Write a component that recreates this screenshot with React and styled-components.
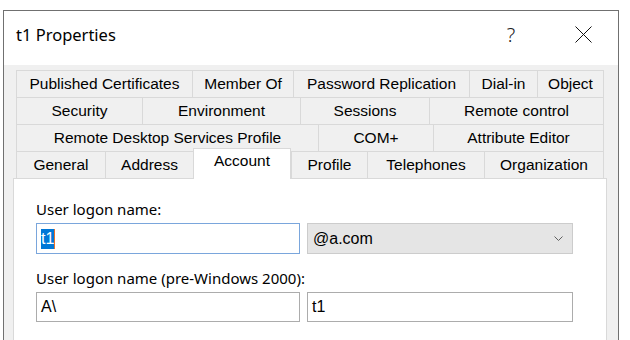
import styled, { createGlobalStyle } from "styled-components";

const GlobalStyle = createGlobalStyle`
  html, body {
    margin: 0;
    padding: 0;
    background: #ffffff;
  }
`;

const uiFont = `"Noto Sans", "Open Sans", sans-serif`;
const tabFont = `"Liberation Sans", Arial, sans-serif`;

const tabRows = [
  [
    { label: "Published Certificates", w: 176 },
    { label: "Member Of", w: 101 },
    { label: "Password Replication", w: 176 },
    { label: "Dial-in", w: 68 },
    { label: "Object", w: 67 },
  ],
  [
    { label: "Security", w: 126 },
    { label: "Environment", w: 158 },
    { label: "Sessions", w: 129 },
    { label: "Remote control", w: 175 },
  ],
  [
    { label: "Remote Desktop Services Profile", w: 302 },
    { label: "COM+", w: 115 },
    { label: "Attribute Editor", w: 171 },
  ],
  [
    { label: "General", w: 89 },
    { label: "Address", w: 88 },
    { label: "Account", w: 98, active: true },
    { label: "Profile", w: 76 },
    { label: "Telephones", w: 117 },
    { label: "Organization", w: 120 },
  ],
];

const Window = styled.div`
  margin: 10px 0 0 3px;
  width: 616px;
  height: 330px;
  box-sizing: border-box;
  border: 1px solid #707070;
  border-bottom: none;
  background: #f0f0f0;
  display: flex;
  flex-direction: column;
`;

const TitleBar = styled.div`
  height: 54px;
  box-sizing: border-box;
  flex: none;
  background: #ffffff;
  display: flex;
  align-items: center;
  padding: 0 0 8px 12px;
  font-family: ${uiFont};
  color: #000;
`;

const Title = styled.div`
  flex: 1;
  font-size: 16.5px;
`;

const HelpButton = styled.div`
  width: 20px;
  text-align: center;
  font-size: 20px;
  font-weight: 300;
  color: #222;
  margin-right: 53px;
`;

const CloseButton = styled.div`
  width: 18px;
  height: 18px;
  margin-right: 26px;
  display: flex;
  align-items: center;
  justify-content: center;
`;

const Body = styled.div`
  flex: 1;
  padding: 5px 11px 0 9px;
  display: flex;
  flex-direction: column;
`;

const TabStrip = styled.div`
  margin: 0 3px;
  display: flex;
  flex-direction: column;
`;

const TabRow = styled.div`
  display: flex;
  height: 27px;
`;

const Tab = styled.div`
  box-sizing: border-box;
  width: ${(p) => p.w}px;
  flex: none;
  border-top: 1px solid #d9d9d9;
  border-left: 1px solid #d9d9d9;
  &:last-child {
    border-right: 1px solid #d9d9d9;
  }
  background: ${(p) => (p.active ? "#ffffff" : "#f0f0f0")};
  font-family: ${tabFont};
  font-size: 15.5px;
  color: #000;
  display: flex;
  align-items: center;
  justify-content: center;
  white-space: nowrap;
  position: relative;
  z-index: ${(p) => (p.active ? 1 : 0)};
  margin-top: ${(p) => (p.active ? "-3px" : "0")};
  height: ${(p) => (p.active ? "31px" : "27px")};
  padding-bottom: ${(p) => (p.active ? "6px" : "0")};
  border-right: ${(p) => (p.active ? "1px solid #d9d9d9" : undefined)};
`;

const Panel = styled.div`
  flex: 1;
  background: #ffffff;
  border: 1px solid #d9d9d9;
  border-bottom: none;
  padding: 20px 0 0 22px;
  display: flex;
  flex-direction: column;
`;

const Label = styled.div`
  font-family: ${uiFont};
  font-size: 15px;
  line-height: 20px;
  color: #000;
  margin-bottom: 4px;
  white-space: nowrap;
`;

const FieldRow = styled.div`
  display: flex;
  gap: 7px;
  margin-bottom: ${(p) => p.mb || 0}px;
`;

const TextBox = styled.div`
  box-sizing: border-box;
  width: ${(p) => p.w || 264}px;
  height: ${(p) => p.h || 30}px;
  border: 1px solid ${(p) => (p.focused ? "#7aa6dc" : "#acacac")};
  background: #ffffff;
  display: flex;
  align-items: center;
  padding-left: 4px;
  font-family: ${tabFont};
  font-size: 16px;
  color: #000;
`;

const Selected = styled.span`
  background: #0078d7;
  color: #ffffff;
  padding: 1px 0;
  border-right: 1px solid #e8702a;
`;

const Combo = styled.div`
  box-sizing: border-box;
  width: 266px;
  height: 31px;
  border: 1px solid #cccccc;
  background: #e5e5e5;
  display: flex;
  align-items: center;
  justify-content: space-between;
  padding: 0 9px 0 5px;
  font-family: ${tabFont};
  font-size: 16px;
  color: #000;
`;

const App = () => {
  return (
    <>
      <GlobalStyle />
      <Window>
        <TitleBar>
          <Title>t1 Properties</Title>
          <HelpButton>?</HelpButton>
          <CloseButton>
            <svg width="17" height="17" viewBox="0 0 17 17">
              <path d="M0.5 0.5 L16.5 16.5 M16.5 0.5 L0.5 16.5" stroke="#111" strokeWidth="1" fill="none" />
            </svg>
          </CloseButton>
        </TitleBar>
        <Body>
          <TabStrip>
            {tabRows.map((row, i) => (
              <TabRow key={i}>
                {row.map((t) => (
                  <Tab key={t.label} w={t.w} active={t.active}>
                    {t.label}
                  </Tab>
                ))}
              </TabRow>
            ))}
          </TabStrip>
          <Panel>
            <Label>User logon name:</Label>
            <FieldRow mb={14}>
              <TextBox focused h={31}>
                <Selected>t1</Selected>
              </TextBox>
              <Combo>
                <span>@a.com</span>
                <svg width="9" height="5" viewBox="0 0 9 5">
                  <path d="M0.5 0.5 L4.5 4.5 L8.5 0.5" stroke="#606060" strokeWidth="1" fill="none" />
                </svg>
              </Combo>
            </FieldRow>
            <Label>User logon name (pre-Windows 2000):</Label>
            <FieldRow>
              <TextBox>A\</TextBox>
              <TextBox w={266}>t1</TextBox>
            </FieldRow>
          </Panel>
        </Body>
      </Window>
    </>
  );
};

export default App;
